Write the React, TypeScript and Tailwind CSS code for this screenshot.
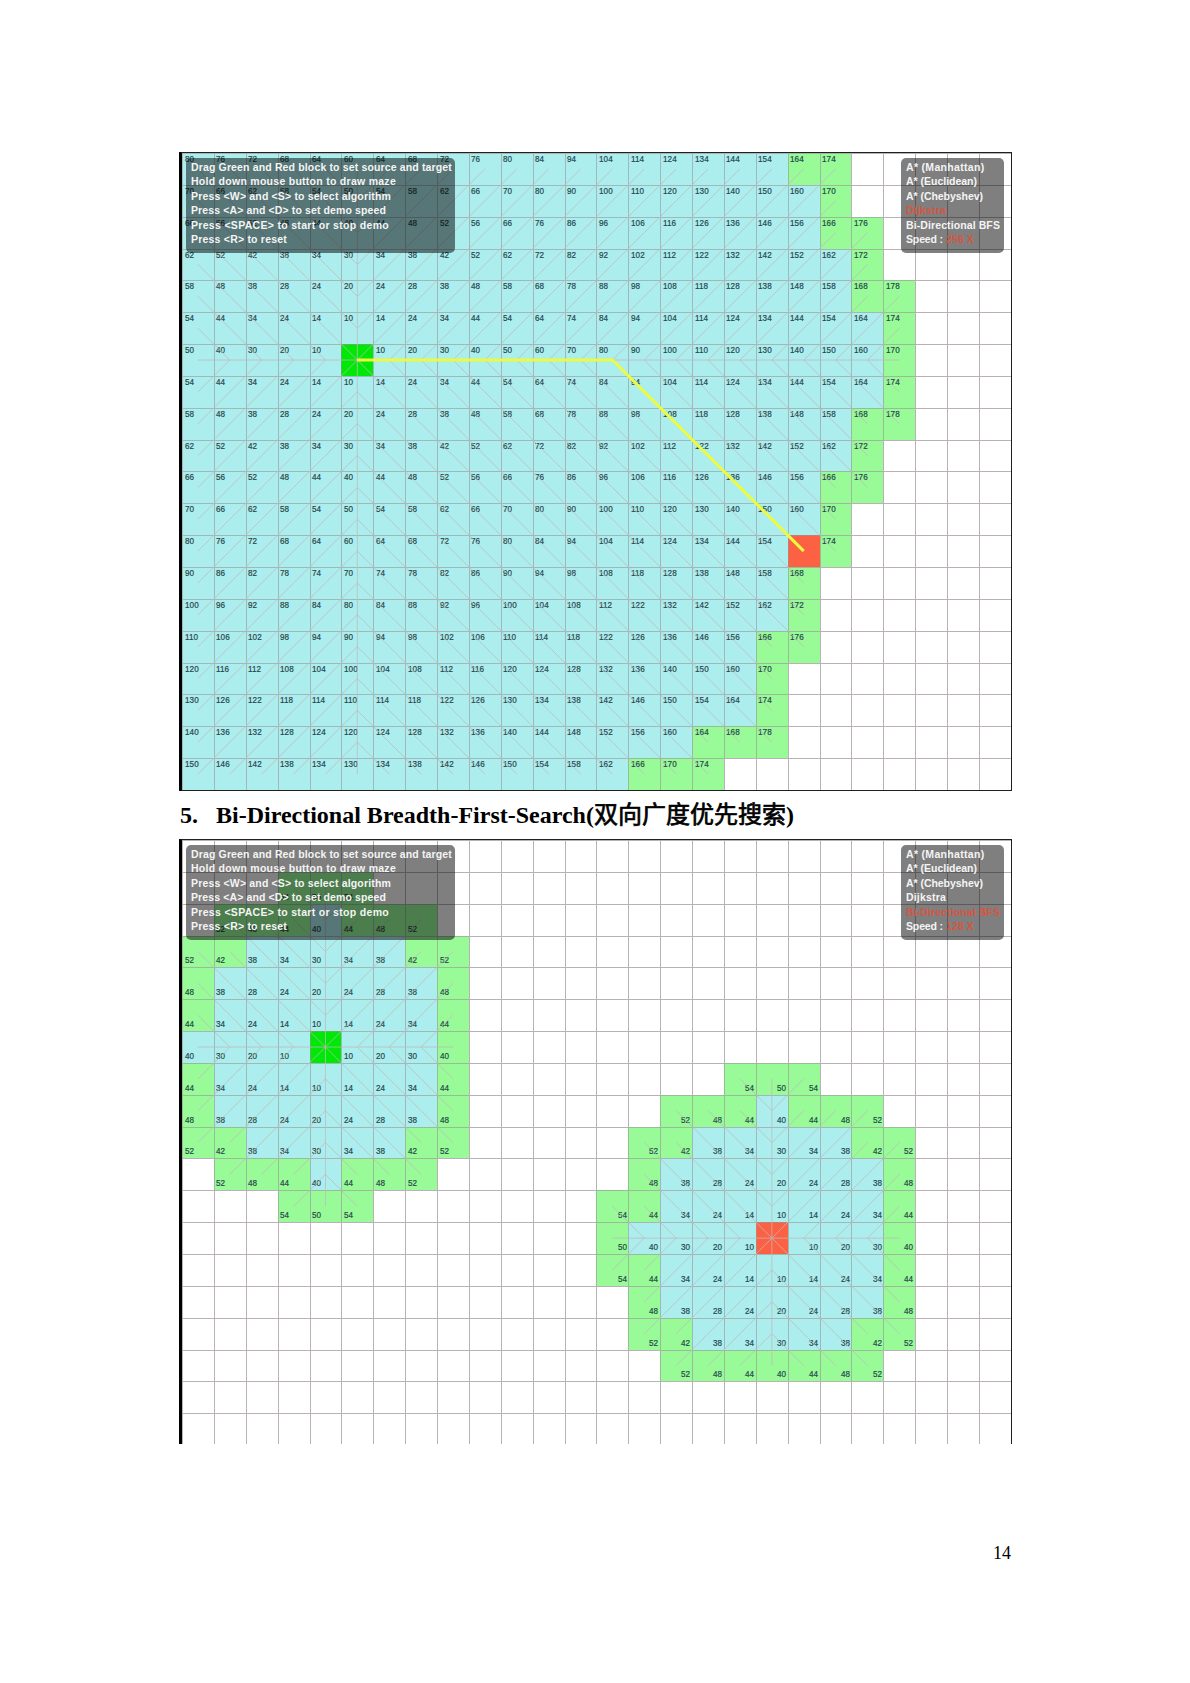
import { useLayoutEffect, useRef, useState } from "react";

type Kind = "closed" | "open" | "source" | "target";
type Cell = { kind: Kind; label: string; corner: string; parent?: [number, number] };
type Grid = Map<string, Cell>;

const COLS = 26;
const STEP = 829 / COLS;

const KIND_CLASS: Record<Kind, string> = {
  closed: "bg-[#acedee] border-[#9a9298]/60",
  open: "bg-[#98fb98] border-[#9a9298]/60",
  source: "bg-[#00e806] border-[#9a9298]/60",
  target: "bg-[#fd6144] border-[#9a9298]/60",
};

const TOP_LEFT = "items-start justify-start pl-[1.5px]";
const BOTTOM_LEFT = "items-end justify-start pb-[1px] pl-[1.5px]";
const BOTTOM_RIGHT = "items-end justify-end pb-[1px] pr-[1.5px]";

function cost(dx: number, dy: number) {
  const a = Math.abs(dx);
  const b = Math.abs(dy);
  return 10 * Math.max(a, b) + 4 * Math.min(a, b);
}

function expand(grid: Grid, c: number, r: number, origin: [number, number], kind: Kind, corner: string) {
  const dx = origin[0] - c;
  const dy = origin[1] - r;
  if (dx === 0 && dy === 0) return;
  grid.set(`${c},${r}`, {
    kind,
    corner,
    label: String(cost(dx, dy)),
    parent: [c + Math.sign(dx), r + Math.sign(dy)],
  });
}

// [closed cells, closed + open cells] counted from the left edge, per row
const DIJKSTRA_ROWS: [number, number][] = [
  [19, 21], [20, 21], [20, 22], [21, 22], [21, 23], [22, 23], [22, 23], [22, 23], [21, 23], [21, 22],
  [20, 22], [20, 21], [19, 21], [19, 20], [19, 20], [18, 20], [18, 19], [18, 19], [16, 19], [14, 17],
];

function dijkstraGrid(): Grid {
  const grid: Grid = new Map();
  DIJKSTRA_ROWS.forEach(([closed, total], r) => {
    for (let c = 0; c < total; c++) expand(grid, c, r, [5, 6], c < closed ? "closed" : "open", TOP_LEFT);
  });
  grid.set("5,6", { kind: "source", label: "", corner: "" });
  grid.set("19,12", { kind: "target", label: "", corner: "" });
  return grid;
}

// g = open, b = closed, . = untouched
const FROM_SOURCE = [
  "...ggg...", ".gggbggg.", "ggbbbbbgg", "gbbbbbbbg", "gbbbbbbbg", "bbbbbbbbg",
  "gbbbbbbbg", "gbbbbbbbg", "ggbbbbbgg", ".gggbggg.", "...ggg...",
];
const FROM_TARGET = [
  "....ggg...", "..gggbggg.", ".ggbbbbbgg", ".gbbbbbbbg", "ggbbbbbbbg", "gbbbbbbbbg",
  "ggbbbbbbbg", ".gbbbbbbbg", ".ggbbbbbgg", "..ggggggg.",
];

function stamp(grid: Grid, rows: string[], at: [number, number], origin: [number, number], corner: string) {
  rows.forEach((row, j) =>
    [...row].forEach((ch, i) => {
      if (ch !== ".") expand(grid, at[0] + i, at[1] + j, origin, ch === "b" ? "closed" : "open", corner);
    }),
  );
}

function bidirectionalGrid(): Grid {
  const grid: Grid = new Map();
  stamp(grid, FROM_SOURCE, [0, 1], [4, 6], BOTTOM_LEFT);
  stamp(grid, FROM_TARGET, [13, 7], [18, 12], BOTTOM_RIGHT);
  grid.set("4,6", { kind: "source", label: "", corner: "" });
  grid.set("18,12", { kind: "target", label: "", corner: "" });
  return grid;
}

// Text stretched to a fixed width by spreading its letters
function Fit({ text, width, className = "" }: { text: string; width: number; className?: string }) {
  const ref = useRef<HTMLSpanElement>(null);
  const [spacing, setSpacing] = useState(0);
  useLayoutEffect(() => {
    if (ref.current) {
      const natural = ref.current.getBoundingClientRect().width - spacing * text.length;
      setSpacing((width - natural) / text.length);
    }
  }, [text, width]);
  return (
    <span ref={ref} className={`inline-block whitespace-pre ${className}`} style={{ letterSpacing: spacing }}>
      {text}
    </span>
  );
}

const HELP: [string, number][] = [
  ["Drag Green and Red block to set source and target", 261],
  ["Hold down mouse button to draw maze", 205],
  ["Press <W> and <S> to select algorithm", 200],
  ["Press <A> and <D> to set demo speed", 195],
  ["Press <SPACE> to start or stop demo", 198],
  ["Press <R> to reset", 96],
];

const ALGORITHMS: [string, number][] = [
  ["A* (Manhattan)", 78.5],
  ["A* (Euclidean)", 71],
  ["A* (Chebyshev)", 77],
  ["Dijkstra", 40],
  ["Bi-Directional BFS", 94],
];

const PANEL =
  "absolute top-[5px] h-[95px] rounded-[5px] bg-black/50 pt-[1.5px] pl-[5px] font-['Liberation_Sans',sans-serif] text-[10.5px] leading-[14.6px] font-bold text-[#f4f4f4]";

function Board({
  grid,
  rows,
  active,
  speed,
  path,
  className,
}: {
  grid: Grid;
  rows: number;
  active: number;
  speed: string;
  path?: string;
  className: string;
}) {
  const cells = Array.from({ length: rows * COLS }, (_, i) => grid.get(`${i % COLS},${Math.floor(i / COLS)}`));
  const links = [...grid.entries()].filter(([, cell]) => cell.parent);
  return (
    <div className={`relative w-[833px] overflow-hidden border-t border-r border-l-[3px] border-[#202020] border-l-black ${className}`}>
      <div className="grid auto-rows-[31.85px] grid-cols-[repeat(26,31.885px)]">
        {cells.map((cell, i) => (
          <div
            key={i}
            className={`flex border-t border-l ${cell ? `${KIND_CLASS[cell.kind]} ${cell.corner}` : "border-[#9a9298]/70"}`}
          >
            {cell?.label && (
              <span
                className={`inline-block scale-x-[.9] font-['Liberation_Sans',sans-serif] text-[9px] leading-[11px] tracking-[0.1px] text-[#27474c] [-webkit-text-stroke:0.2px_#27474c] ${cell.corner === BOTTOM_RIGHT ? "origin-right" : "origin-left"}`}
              >
                {cell.label}
              </span>
            )}
          </div>
        ))}
      </div>
      <svg className="absolute top-0 left-0" width={829} height={rows * 31.85} fill="none">
        {links.map(([key, cell]) => {
          const [c, r] = key.split(",").map(Number);
          const [pc, pr] = cell.parent!;
          return (
            <line
              key={key}
              x1={(c + 0.5) * STEP}
              y1={(r + 0.5) * 31.85}
              x2={(pc + 0.5) * STEP}
              y2={(pr + 0.5) * 31.85}
              stroke="#c0b8bc"
              strokeOpacity={0.75}
            />
          );
        })}
        {path && <path d={path} stroke="#ecfb40" strokeWidth={3} />}
      </svg>
      <div className={`${PANEL} left-[4px] w-[269px]`}>
        {HELP.map(([text, width]) => (
          <div key={text} className="h-[14.6px]">
            <Fit text={text} width={width} />
          </div>
        ))}
      </div>
      <div className={`${PANEL} left-[719px] w-[103px]`}>
        {ALGORITHMS.map(([text, width], i) => (
          <div key={text} className="h-[14.6px]">
            <Fit text={text} width={width} className={i === active ? "text-[#d45643]" : ""} />
          </div>
        ))}
        <div className="flex h-[14.6px] gap-[3px]">
          <Fit text="Speed :" width={37} />
          <Fit text={speed} width={28} className="text-[#d45643]" />
        </div>
      </div>
    </div>
  );
}

const DIJKSTRA = dijkstraGrid();
const BIDIRECTIONAL = bidirectionalGrid();
const PATH = `M${5.5 * STEP} ${6.5 * 31.85}H${13.5 * STEP}L${19.5 * STEP} ${12.5 * 31.85}`;

export default function App() {
  return (
    <div className="flex h-[1683px] w-[1190px] flex-col bg-white pt-[152px] pl-[179px] text-black">
      <Board grid={DIJKSTRA} rows={20} active={3} speed="256 X" path={PATH} className="h-[639px] border-b" />
      <h2 className="flex h-[48px] items-baseline pl-[1px] font-['Liberation_Serif',serif] text-[24px] leading-[48px] font-bold whitespace-nowrap">
        <span className="w-[36px]">5.</span>
        <span>
          Bi-Directional Breadth-First-Search(
          <span className="font-['Noto_Sans_CJK_SC',sans-serif] leading-none font-normal [-webkit-text-stroke:0.7px_black]">双向广度优先搜索</span>)
        </span>
      </h2>
      <Board grid={BIDIRECTIONAL} rows={19} active={4} speed="128 X" className="h-[605px]" />
      <div className="mt-[97px] w-[832px] text-right font-['Liberation_Serif',serif] text-[18px] leading-[24px]">14</div>
    </div>
  );
}
